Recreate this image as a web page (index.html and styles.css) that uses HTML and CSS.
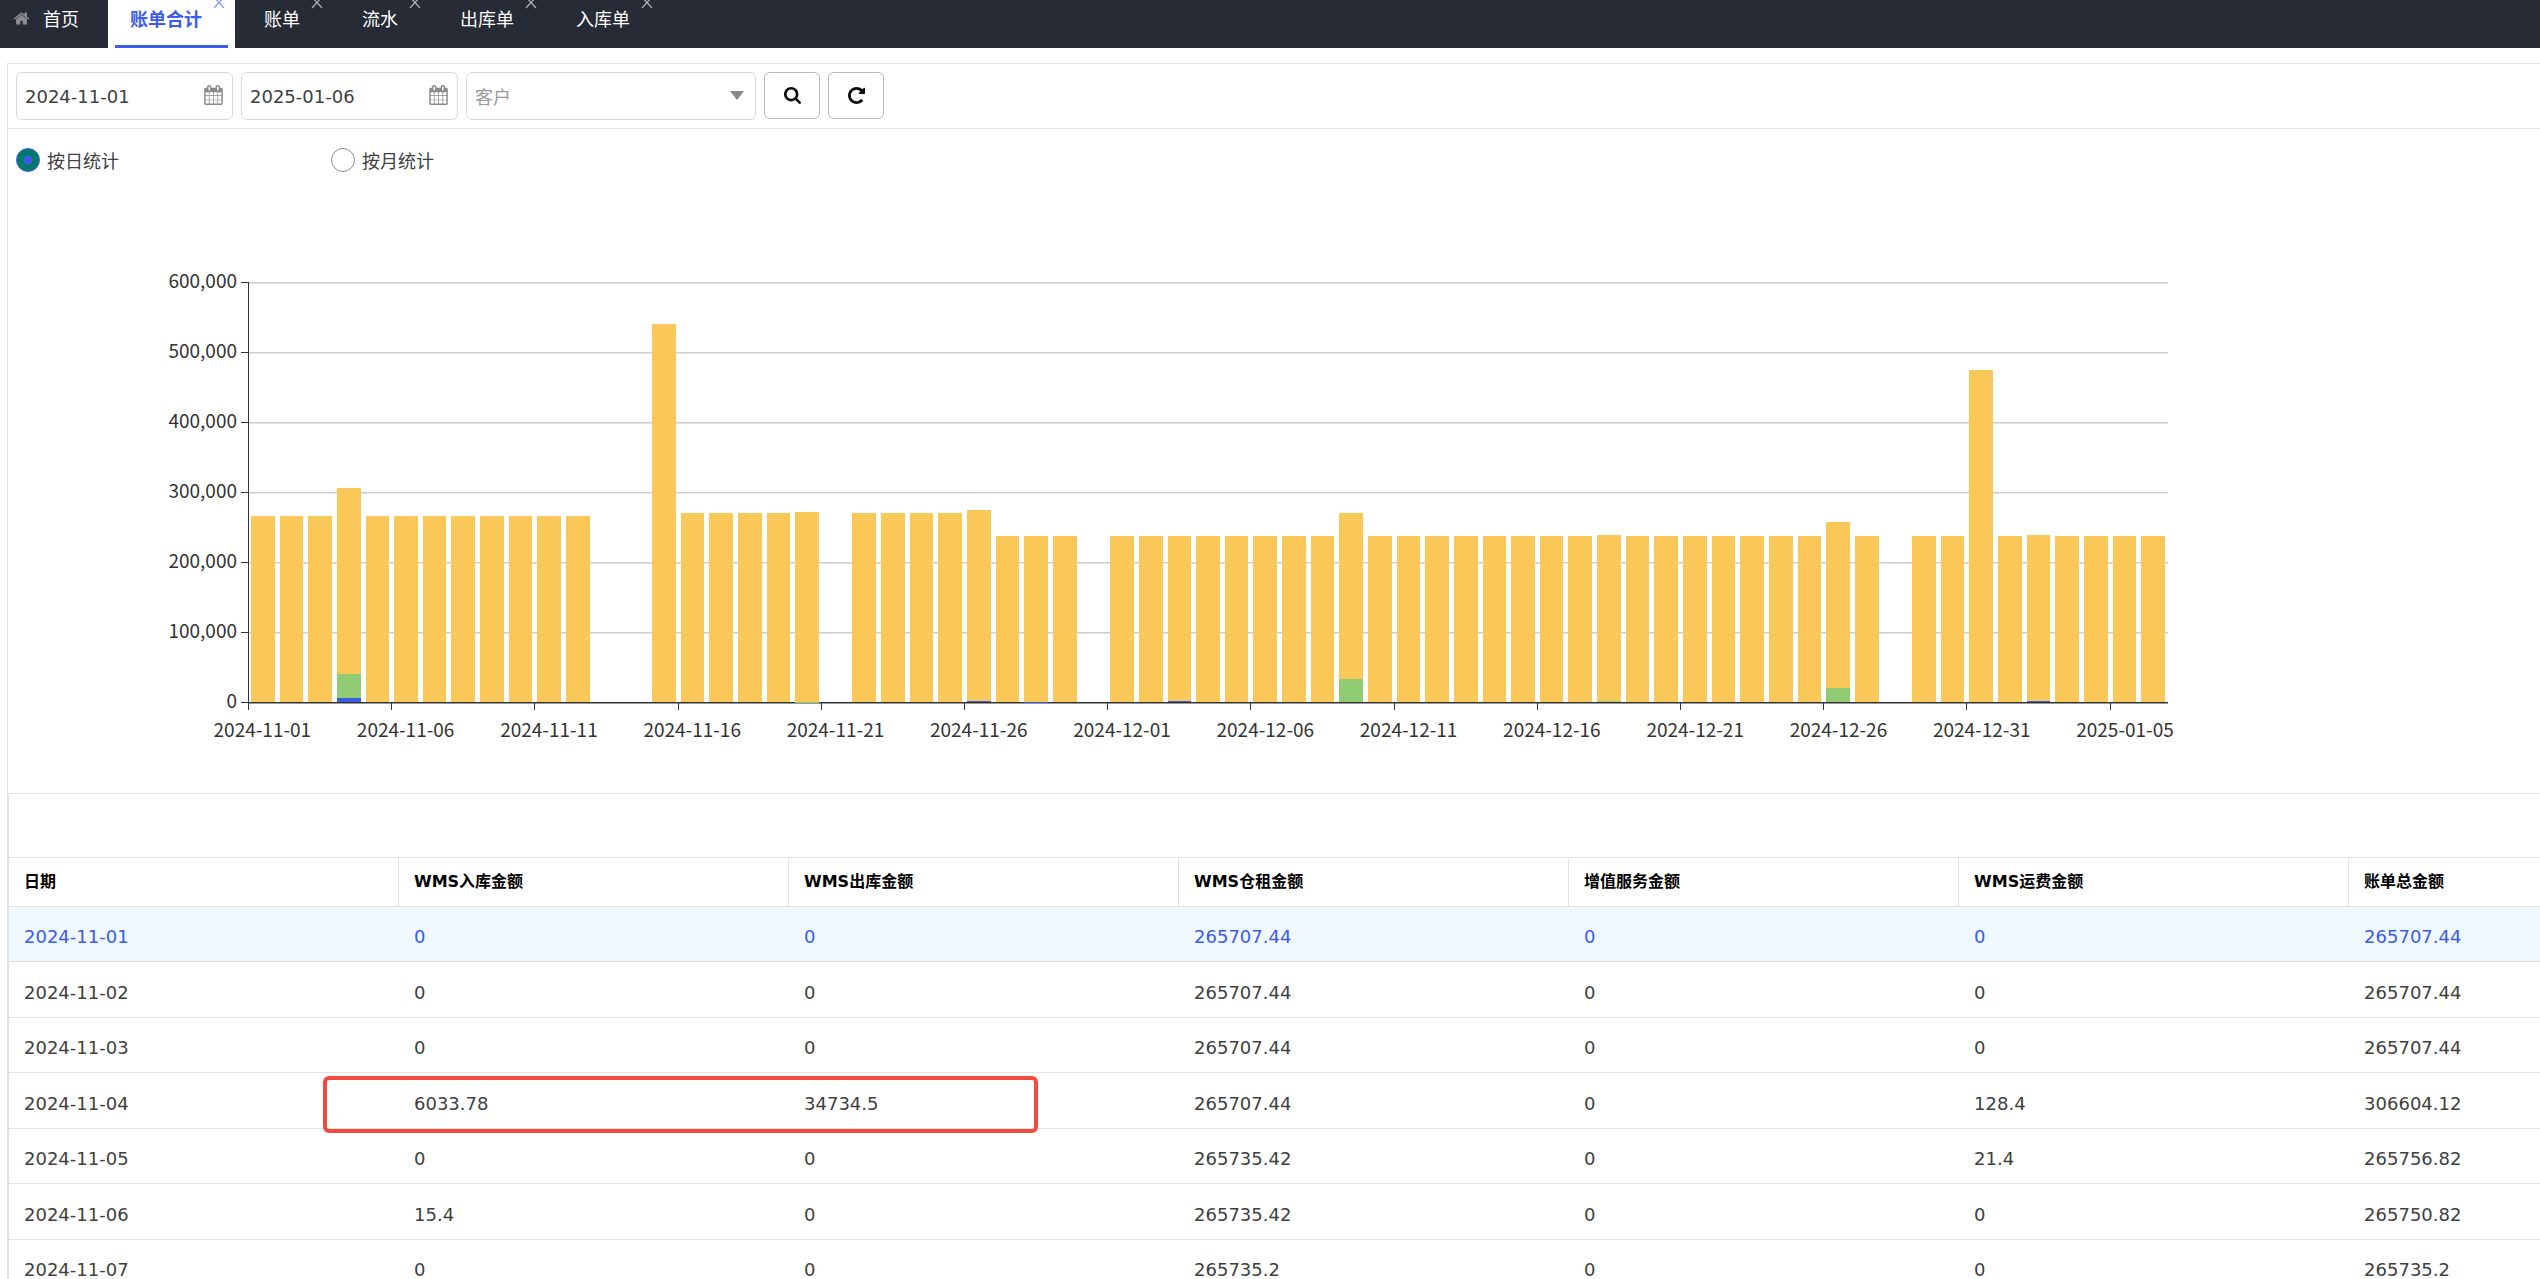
FILE: index.html
```html
<!DOCTYPE html>
<html lang="zh-CN">
<head>
<meta charset="utf-8">
<title>账单合计</title>
<link rel="stylesheet" href="styles.css">
</head>
<body>
<svg class="sprite" aria-hidden="true">
  <symbol id="i-home" viewBox="0 253 1792 1283"><path d="M1472 992v480q0 26-19 45t-45 19h-384v-384h-256v384h-384q-26 0-45-19t-19-45v-480q0-1 .5-3t.5-3l575-474 575 474q1 2 1 6zm223-69l-62 74q-8 9-21 11h-3q-13 0-21-7l-692-577-692 577q-12 8-24 7-13-2-21-11l-62-74q-8-10-7-23.500t11-21.500l719-599q32-26 76-26t76 26l244 204v-195q0-14 9-23t23-9h192q14 0 23 9t9 23v408l219 182q10 8 11 21.500t-7 23.500z"/></symbol>
  <symbol id="i-calendar" viewBox="64 0 1664 1792"><path d="M192 1664h288v-288h-288v288zm352 0h320v-288h-320v288zm-352-352h288v-320h-288v320zm352 0h320v-320h-320v320zm-352-384h288v-288h-288v288zm736 736h320v-288h-320v288zm-384-736h320v-288h-320v288zm768 736h288v-288h-288v288zm-384-352h320v-320h-320v320zm-352-864v-288q0-13-9.500-22.500t-22.500-9.500h-64q-13 0-22.500 9.500t-9.500 22.500v288q0 13 9.500 22.500t22.500 9.500h64q13 0 22.500-9.500t9.500-22.500zm736 864h288v-320h-288v320zm-384-384h320v-288h-320v288zm384 0h288v-288h-288v288zm32-480v-288q0-13-9.500-22.500t-22.500-9.500h-64q-13 0-22.500 9.500t-9.500 22.500v288q0 13 9.500 22.500t22.500 9.500h64q13 0 22.500-9.500t9.500-22.500zm384-64v1280q0 52-38 90t-90 38h-1408q-52 0-90-38t-38-90v-1280q0-52 38-90t90-38h128v-96q0-66 47-113t113-47h64q66 0 113 47t47 113v96h384v-96q0-66 47-113t113-47h64q66 0 113 47t47 113v96h128q52 0 90 38t38 90z"/></symbol>
  <symbol id="i-search" viewBox="0 128 1664 1664"><path d="M1152 832q0-185-131.500-316.500t-316.500-131.500-316.500 131.500-131.500 316.500 131.500 316.500 316.500 131.500 316.500-131.500 131.500-316.500zm512 832q0 52-38 90t-90 38q-54 0-90-38l-343-342q-179 124-399 124-143 0-273.500-55.500t-225-150-150-225-55.500-273.500 55.500-273.500 150-225 225-150 273.500-55.500 273.500 55.500 225 150 150 225 55.500 273.500q0 220-124 399l343 343q37 37 37 90z"/></symbol>
  <symbol id="i-refresh" viewBox="128 128 1536 1536"><path d="M1664 256v448q0 26-19 45t-45 19h-448q-42 0-59-40-17-39 14-69l138-138q-148-137-349-137-104 0-198.500 40.500t-163.500 109.500-109.500 163.500-40.500 198.500 40.500 198.500 109.500 163.500 163.500 109.500 198.500 40.500q119 0 225-52t179-147q7-10 23-12 15 0 25 9l137 138q9 8 9.500 20.500t-7.500 22.500q-109 132-264 204.500t-327 72.500q-156 0-298-61t-245-164-164-245-61-298 61-298 164-245 245-164 298-61q147 0 284.500 55.500t244.500 156.500l130-129q29-31 70-14 39 17 39 59z"/></symbol>
  <symbol id="i-close" viewBox="0 0 12 12"><path d="M1 0L11 11M11 0L1 11" fill="none" stroke="currentColor" stroke-width="1.2"/></symbol>
</svg>

<nav class="tabs">
  <div class="tab tab-home"><a href="#"><svg class="icon-home"><use href="#i-home"/></svg>首页</a></div>
  <div class="tab active"><a href="#">账单合计</a><button class="close" aria-label="关闭"><svg><use href="#i-close"/></svg></button></div>
  <div class="tab"><a href="#">账单</a><button class="close" aria-label="关闭"><svg><use href="#i-close"/></svg></button></div>
  <div class="tab"><a href="#">流水</a><button class="close" aria-label="关闭"><svg><use href="#i-close"/></svg></button></div>
  <div class="tab"><a href="#">出库单</a><button class="close" aria-label="关闭"><svg><use href="#i-close"/></svg></button></div>
  <div class="tab"><a href="#">入库单</a><button class="close" aria-label="关闭"><svg><use href="#i-close"/></svg></button></div>
</nav>

<main class="panel">
  <form class="toolbar">
    <div class="field"><input type="text" value="2024-11-01" aria-label="开始日期"><svg class="icon-calendar"><use href="#i-calendar"/></svg></div>
    <div class="field"><input type="text" value="2025-01-06" aria-label="结束日期"><svg class="icon-calendar"><use href="#i-calendar"/></svg></div>
    <div class="field field-select"><select aria-label="客户"><option>客户</option></select></div>
    <div class="actions">
      <button type="button" aria-label="查询"><svg><use href="#i-search"/></svg></button>
      <button type="button" aria-label="刷新"><svg><use href="#i-refresh"/></svg></button>
    </div>
  </form>

  <div class="modes">
    <label><input type="radio" name="mode" checked>按日统计</label>
    <label><input type="radio" name="mode">按月统计</label>
  </div>

  <section class="chart" aria-label="账单金额">
    <div class="y-labels">
      <span>600,000</span><span>500,000</span><span>400,000</span><span>300,000</span><span>200,000</span><span>100,000</span><span>0</span>
    </div>
    <div class="plot">
      <div class="gridlines"><i></i><i></i><i></i><i></i><i></i><i></i></div>
      <div class="bars" id="bars"></div>
    </div>
    <div class="x-labels" id="x-labels"></div>
  </section>

  <section class="grid">
    <div class="grid-toolbar"></div>
    <table>
      <colgroup><col class="col"><col class="col"><col class="col"><col class="col"><col class="col"><col class="col"><col></colgroup>
      <thead>
        <tr><th>日期</th><th>WMS入库金额</th><th>WMS出库金额</th><th>WMS仓租金额</th><th>增值服务金额</th><th>WMS运费金额</th><th>账单总金额</th></tr>
      </thead>
      <tbody>
        <tr class="selected"><td>2024-11-01</td><td>0</td><td>0</td><td>265707.44</td><td>0</td><td>0</td><td>265707.44</td></tr>
        <tr><td>2024-11-02</td><td>0</td><td>0</td><td>265707.44</td><td>0</td><td>0</td><td>265707.44</td></tr>
        <tr><td>2024-11-03</td><td>0</td><td>0</td><td>265707.44</td><td>0</td><td>0</td><td>265707.44</td></tr>
        <tr><td>2024-11-04</td><td class="marked">6033.78<span class="marker"></span></td><td>34734.5</td><td>265707.44</td><td>0</td><td>128.4</td><td>306604.12</td></tr>
        <tr><td>2024-11-05</td><td>0</td><td>0</td><td>265735.42</td><td>0</td><td>21.4</td><td>265756.82</td></tr>
        <tr><td>2024-11-06</td><td>15.4</td><td>0</td><td>265735.42</td><td>0</td><td>0</td><td>265750.82</td></tr>
        <tr><td>2024-11-07</td><td>0</td><td>0</td><td>265735.2</td><td>0</td><td>0</td><td>265735.2</td></tr>
      </tbody>
    </table>
  </section>
</main>
<script src="chart.js"></script>
</body>
</html>
```

FILE: styles.css
```css
* { box-sizing: border-box; }

:root {
  --line: #e2e2e2;
  --accent: #3b5be8;
  --cjk: "Noto Sans CJK SC", sans-serif;
}

body {
  margin: 0;
  height: 100vh;
  display: flex;
  flex-direction: column;
  overflow: hidden;
  background: #fff;
  color: #404040;
  font: 18px/24px "DejaVu Sans", var(--cjk);
}

.sprite { display: none; }
svg { fill: currentColor; }

/* tab bar */
.tabs {
  display: flex;
  flex: none;
  gap: 7px;
  height: 48px;
  background: #262b36;
  font-family: var(--cjk);
}
.tab {
  position: relative;
  padding: 6px 33px 0 22px;
}
.tab a {
  display: flex;
  align-items: center;
  color: #fff;
  text-decoration: none;
}
.tab-home { padding: 6px 22px 0 13px; }
.icon-home {
  width: 17px;
  height: 13px;
  margin-right: 13px;
  color: #8c8c8c;
}
.tab.active { background: #fff; }
.tab.active a { color: var(--accent); font-weight: 700; }
.tab.active::after {
  content: "";
  position: absolute;
  inset: auto 7px 0;
  height: 3px;
  background: var(--accent);
}
.close {
  position: absolute;
  top: -3px;
  right: 10px;
  width: 12px;
  height: 12px;
  padding: 0;
  border: 0;
  background: none;
  color: #b0b3b9;
}
.close svg { display: block; width: 12px; height: 12px; }
.active .close { color: #8297f0; }

/* panel */
.panel {
  flex: 1;
  min-height: 0;
  margin: 15px 0 0 7px;
  border: solid var(--line);
  border-width: 1px 0 0 1px;
  overflow: hidden;
}

/* filters */
.toolbar {
  display: flex;
  align-items: flex-start;
  gap: 8px;
  height: 65px;
  padding: 8px;
  border-bottom: 1px solid var(--line);
}
.field { position: relative; width: 217px; height: 48px; }
.field input,
.field select {
  width: 100%;
  height: 100%;
  padding: 0 8px;
  border: 1px solid #d9d9d9;
  border-radius: 6px;
  background: #fff;
  color: inherit;
  font: inherit;
  outline: 0;
}
.field-select { width: 290px; }
.field select {
  appearance: none;
  color: #999;
  font-family: var(--cjk);
}
.field-select::after {
  content: "";
  position: absolute;
  top: 19px;
  right: 12px;
  border: solid transparent;
  border-width: 9px 7px 0;
  border-top-color: #888;
}
.icon-calendar {
  position: absolute;
  top: 13px;
  right: 10px;
  width: 19px;
  height: 20px;
  color: #8a8a8a;
}
.actions { display: flex; gap: 8px; }
.actions button {
  display: grid;
  place-items: center;
  width: 56px;
  height: 47px;
  padding: 0;
  border: 1px solid #b9bac0;
  border-radius: 6px;
  background: #fff;
  color: #0b0b12;
}
.actions svg { width: 17px; height: 17px; }

/* day / month switch */
.modes {
  display: flex;
  padding: 19px 8px 0;
  font-family: var(--cjk);
}
.modes label {
  display: flex;
  align-items: center;
  gap: 7px;
  width: 315px;
}
.modes input {
  appearance: none;
  width: 24px;
  height: 24px;
  margin: 0;
  border: 1px solid #8c8c8c;
  border-radius: 50%;
}
.modes input:checked {
  border-color: var(--accent);
  background: radial-gradient(circle, var(--accent) 4px, #007a68 5px);
}

/* chart */
.chart {
  display: grid;
  grid-template-columns: 10% 1fr 10%;
  grid-template-rows: 420px 91px;
  width: 95%;
  max-width: 2400px;
  padding-top: 110px;
  font: 19px/24px var(--cjk);
  color: #333;
}
.y-labels {
  display: flex;
  flex-direction: column;
  justify-content: space-between;
  align-items: flex-end;
  margin: -14px 11px -10px 0;
}
.plot {
  position: relative;
  border-left: 1px solid #333;
}
.gridlines {
  position: absolute;
  inset: 0;
  display: grid;
  grid-template-rows: repeat(6, 1fr);
}
.gridlines i {
  position: relative;
  border-top: 1px solid #ccc;
  box-shadow: inset 0 1px #e6e6e6;
}
.gridlines i::before,
.plot::before {
  content: "";
  position: absolute;
  top: -1px;
  left: -8px;
  width: 8px;
  height: 1px;
  background: #333;
}
.plot::before { top: 100%; }
.bars {
  position: relative;
  display: flex;
  height: 421px;
  border-bottom: 1px solid #333;
  box-shadow: 0 1px #999;
}
.day {
  flex: 1;
  display: flex;
  flex-direction: column;
  justify-content: flex-end;
  position: relative;
  padding: 0 3px 0 2px;
}
.day.tick::after {
  content: "";
  position: absolute;
  top: 100%;
  left: -1px;
  width: 1px;
  height: 8px;
  background: #333;
}
.rent { background: #fac858; }
.outbound { background: #91cc75; }
.inbound { background: var(--accent); }
.x-labels {
  grid-column: 2;
  display: flex;
  padding-top: 15px;
}
.x-labels span {
  flex: 1;
  min-width: 0;
  display: flex;
  justify-content: center;
  white-space: nowrap;
}

/* data grid */
.grid {
  border: solid var(--line);
  border-width: 1px 0 0 1px;
}
.grid-toolbar { height: 63px; }
table {
  width: 100%;
  table-layout: fixed;
  border-collapse: separate;
  border-spacing: 0;
}
.col { width: 15.41%; }
th, td {
  padding: 0 15px;
  border-bottom: 1px solid var(--line);
  text-align: left;
}
th {
  height: 50px;
  border-top: 1px solid var(--line);
  border-right: 1px solid var(--line);
  color: #000;
  font-size: 16px;
}
th:last-child { border-right: 0; }
td {
  height: 55px;
  padding-top: 6px;
}
tr:nth-child(even) td { height: 56px; }
.selected td { background: #eff7ff; color: var(--accent); }
.marked { position: relative; }
.marker {
  position: absolute;
  inset: 3px -249px -5px -76px;
  border: 4px solid #f24b3d;
  border-radius: 6px;
}
```

FILE: chart.js
```js
// Daily amounts in thousands: [rent, outbound, inbound]
const rent = [
  265.7, 265.7, 265.7, 265.7, 265.7, 265.7, 265.7, 265.7, 265.7, 265.7, 265.7, 265.7, 0, 0,
  540.5, 270, 270, 270, 270, 270.5, 0, 270, 270, 270, 270, 273.5, 236.5, 236.5, 236.5, 0,
  236.5, 236.5, 236.5, 236.5, 236.5, 236.5, 236.5, 236.5, 236.5, 236.5, 236.5, 236.5,
  236.5, 236.5, 236.5, 236.5, 236.5, 237, 237, 237, 237, 237, 237, 237, 237, 237, 237, 0,
  237, 237, 475, 237, 237, 237, 237, 237, 237
];
const outbound = { 3: 34.7, 19: 0.5, 38: 33.5, 47: 1.4, 55: 19.5 };
const inbound = { 3: 6, 25: 1.5, 27: 0.5, 32: 0.9, 62: 0.9 };
const max = 600;

const bars = document.getElementById("bars");
const labels = document.getElementById("x-labels");

rent.forEach((value, i) => {
  const day = document.createElement("div");
  day.className = i % 5 ? "day" : "day tick";
  const parts = [["rent", value], ["outbound", outbound[i]], ["inbound", inbound[i]]];
  for (const [name, amount] of parts) {
    if (!amount) continue;
    const part = document.createElement("div");
    part.className = name;
    part.style.height = (amount / max) * 100 + "%";
    day.append(part);
  }
  bars.append(day);

  const label = document.createElement("span");
  if (i % 5 === 0) {
    label.textContent = new Date(Date.UTC(2024, 10, 1 + i)).toISOString().slice(0, 10);
  }
  labels.append(label);
});
```
